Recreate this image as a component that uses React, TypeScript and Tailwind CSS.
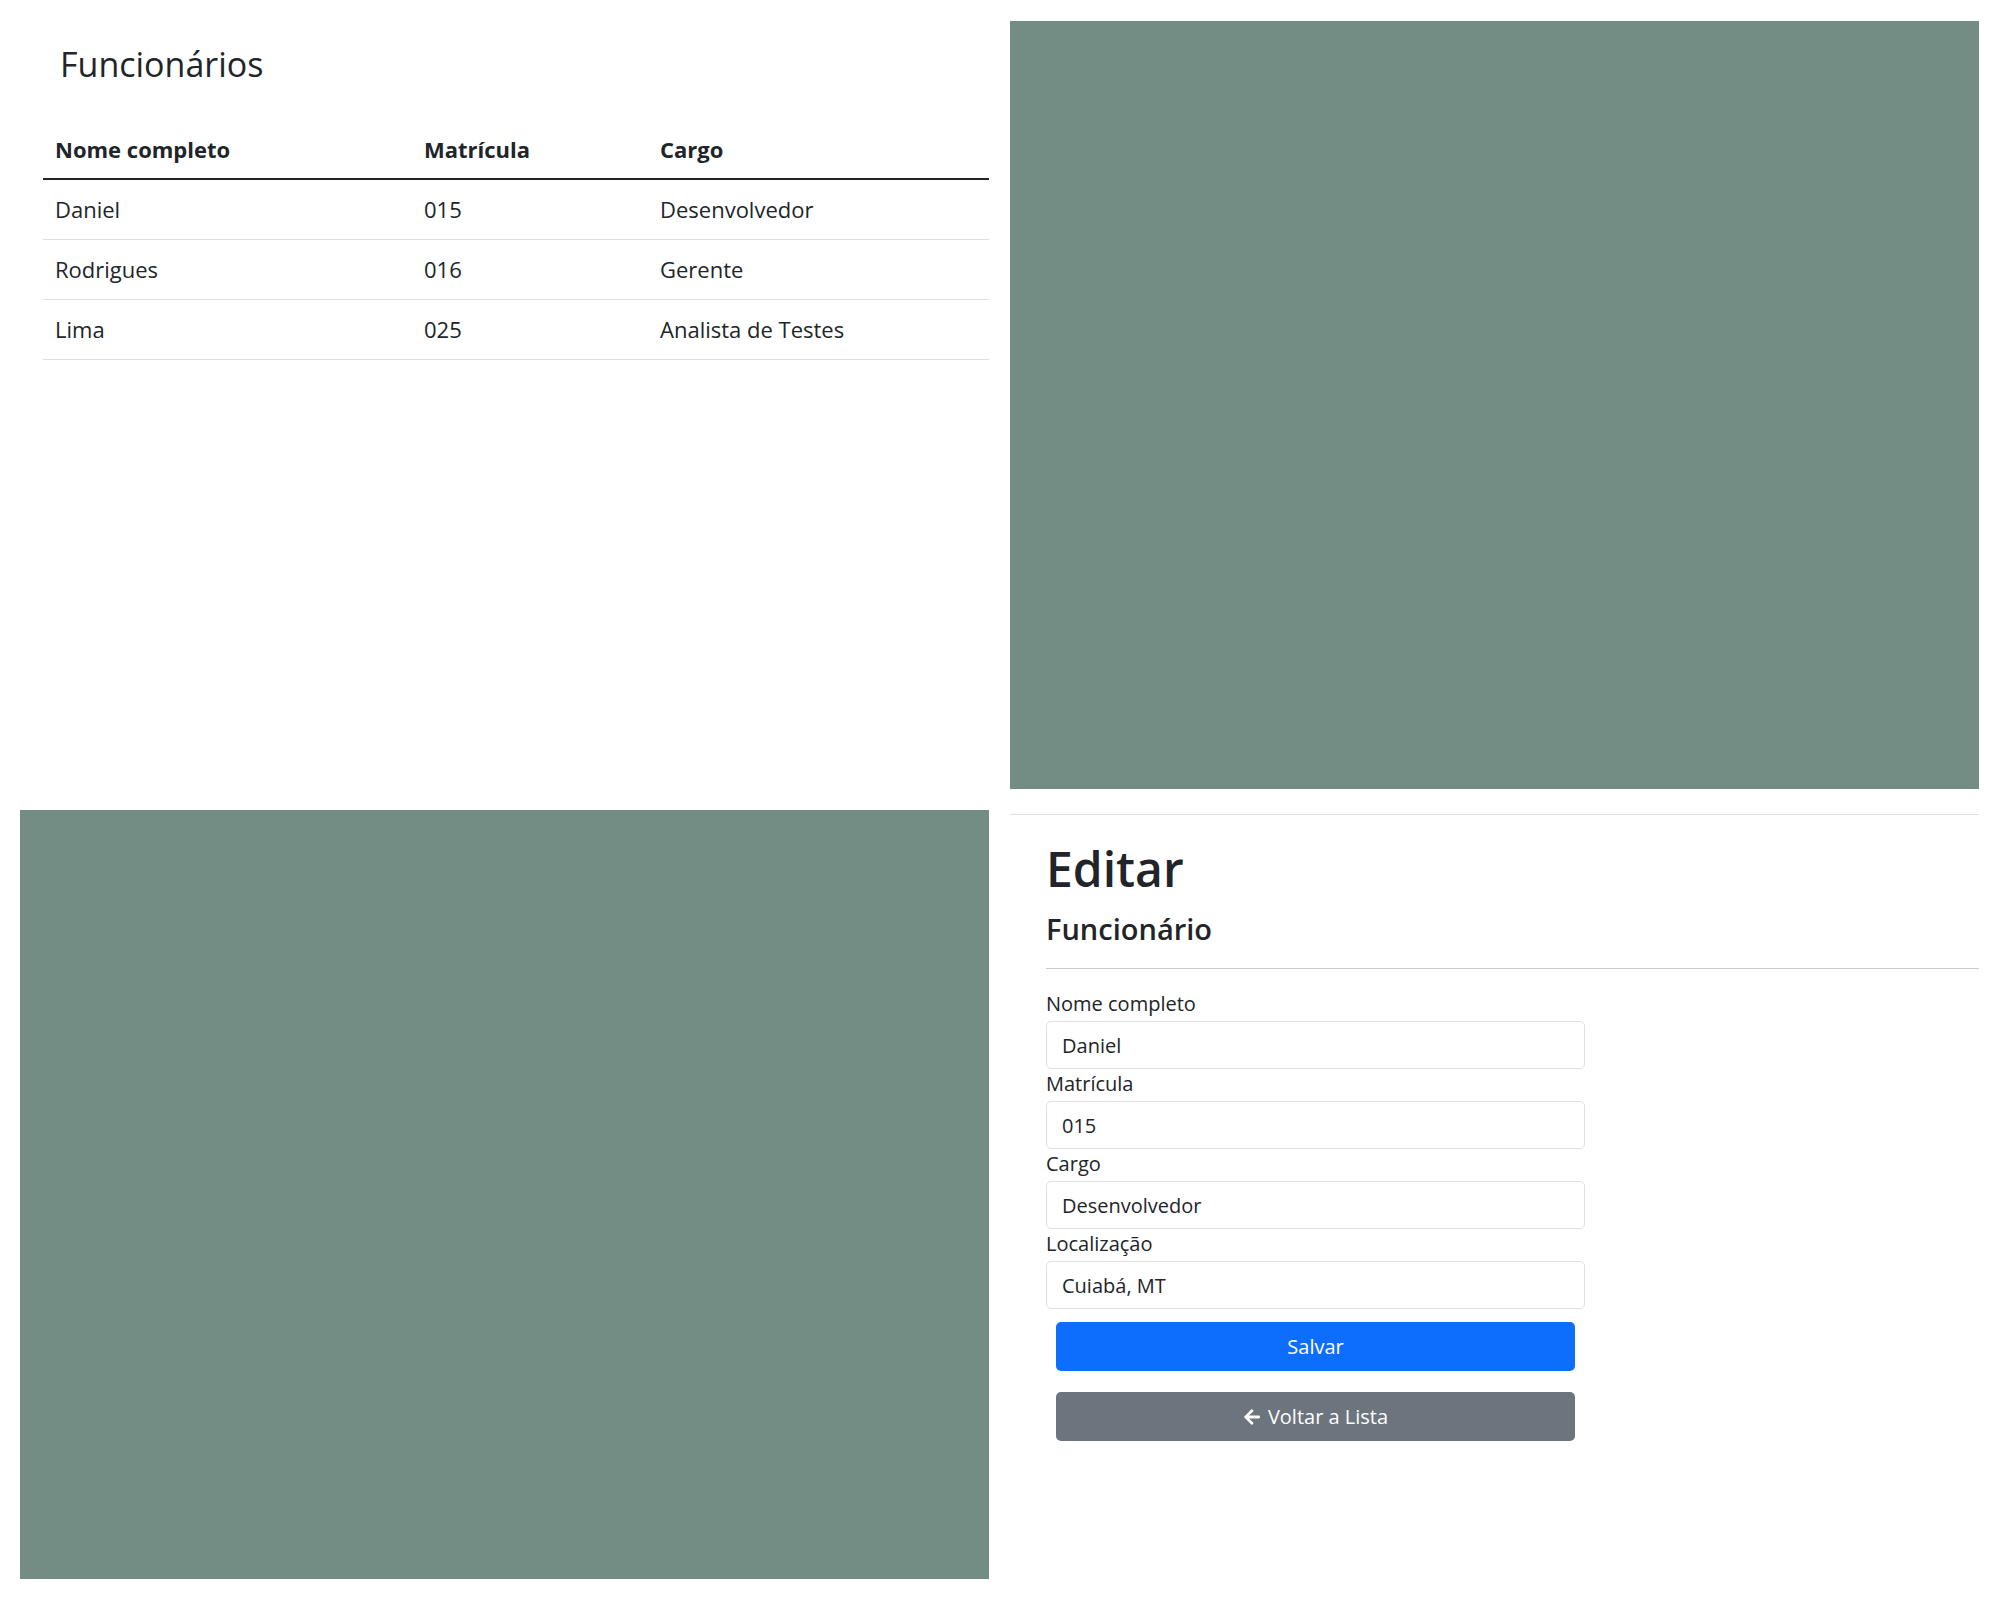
import { FaArrowLeft } from 'react-icons/fa';

const funcionarios = [
  { nome: 'Daniel', matricula: '015', cargo: 'Desenvolvedor' },
  { nome: 'Rodrigues', matricula: '016', cargo: 'Gerente' },
  { nome: 'Lima', matricula: '025', cargo: 'Analista de Testes' },
];

const campos = [
  { label: 'Nome completo', value: 'Daniel' },
  { label: 'Matrícula', value: '015' },
  { label: 'Cargo', value: 'Desenvolvedor' },
  { label: 'Localização', value: 'Cuiabá, MT' },
];

const ListaFuncionarios = () => (
  <div className="bg-white">
    <h3 className="ml-[40px] mt-[22px] mb-[34px] text-[34px] leading-[43px] font-medium">Funcionários</h3>
    <div className="ml-[23px]">
      <div className="grid grid-cols-[369px_236px_341px] h-[60px] items-center border-b-2 border-[#212529] font-bold text-[22px]">
        <div className="px-[12px]">Nome completo</div>
        <div className="px-[12px]">Matrícula</div>
        <div className="px-[12px]">Cargo</div>
      </div>
      {funcionarios.map((f, i) => (
        <div
          key={i}
          className="grid grid-cols-[369px_236px_341px] h-[60px] items-center border-b border-[#dee2e6] text-[22px]"
        >
          <div className="px-[12px]">{f.nome}</div>
          <div className="px-[12px]">{f.matricula}</div>
          <div className="px-[12px]">{f.cargo}</div>
        </div>
      ))}
    </div>
  </div>
);

const EditarFuncionario = () => (
  <div className="bg-white pt-[4px]">
    <div className="border-t border-[#dee2e6]" />
    <div className="pl-[36px]">
      <h1 className="mt-[24px] text-[48px] leading-[60px] font-semibold">Editar</h1>
      <h4 className="mt-[11px] text-[29px] leading-[37px] font-semibold">Funcionário</h4>
      <div className="mt-[21px] border-t border-[#c8c9ca]" />
      <form className="mt-[20px] w-[539px]">
        {campos.map((c, i) => (
          <div key={i}>
            <label className="block text-[20px] leading-[30px] mb-[2px]">{c.label}</label>
            <input
              readOnly
              value={c.value}
              className="block w-full h-[48px] px-[15px] text-[20px] border border-[#dee2e6] rounded-[5px] bg-white text-[#212529] outline-none"
            />
          </div>
        ))}
        <div className="px-[10px] pt-[13px] flex flex-col gap-[21px]">
          <button
            type="button"
            className="h-[49px] w-full rounded-[5px] bg-[#0d6efd] text-white text-[20px]"
          >
            Salvar
          </button>
          <button
            type="button"
            className="h-[49px] w-full rounded-[5px] bg-[#6c757d] text-white text-[20px] flex items-center justify-center gap-[7px]"
          >
            <FaArrowLeft className="w-[18px] h-[18px]" />
            Voltar a Lista
          </button>
        </div>
      </form>
    </div>
  </div>
);

export default function App() {
  return (
    <div
      className="w-[2000px] h-[1600px] bg-white text-[#212529] px-[20px] pt-[21px] grid grid-cols-[969px_969px] grid-rows-[768px_769px] gap-[21px]"
      style={{ fontFamily: '"Open Sans", "Noto Sans", sans-serif' }}
    >
      <ListaFuncionarios />
      <div className="bg-[#738c84]" />
      <div className="bg-[#738c84]" />
      <EditarFuncionario />
    </div>
  );
}
